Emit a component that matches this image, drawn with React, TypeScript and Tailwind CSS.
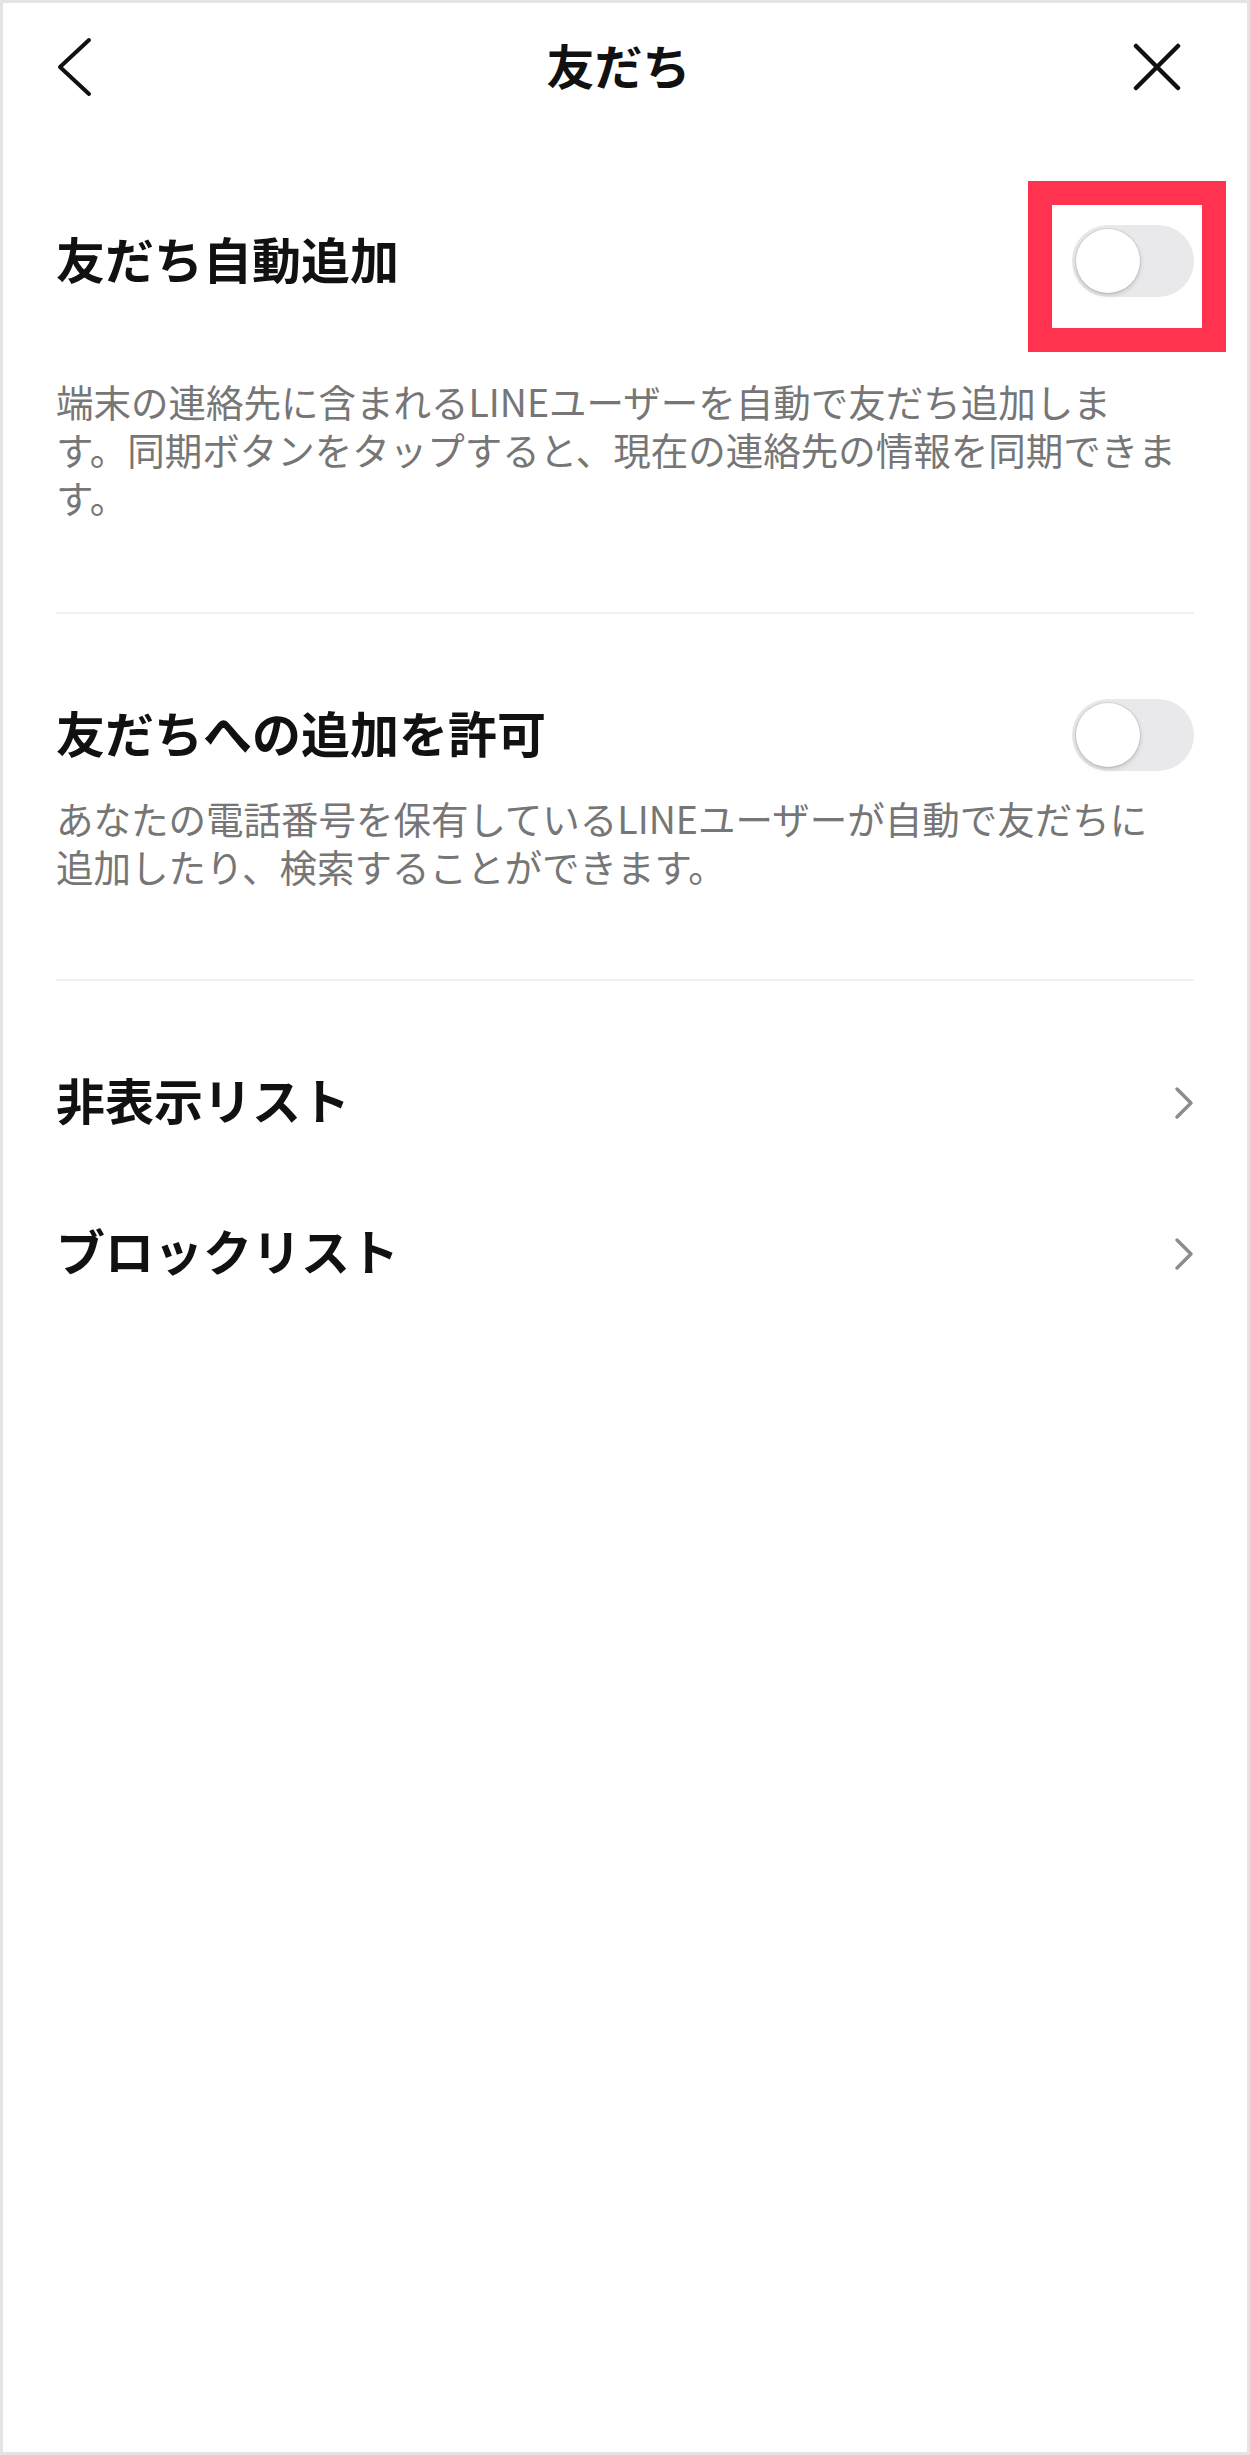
const font = "font-['Noto_Sans_CJK_JP','Noto_Sans',sans-serif]";

type ToggleProps = {
    highlighted?: boolean;
};

const Toggle = ({ highlighted }: ToggleProps) => {
    return (
        <div className="relative w-[122px] h-[72px] shrink-0">
            <div className="w-full h-full rounded-full bg-[#e9e9eb] p-[4px] flex items-center">
                <div className="w-[64px] h-[64px] rounded-full bg-white shadow-[0_0_0_1px_rgba(0,0,0,0.07),0_2px_5px_rgba(0,0,0,0.18)]" />
            </div>
            {highlighted && (
                <div className="absolute left-[-44px] top-[-44px] w-[198px] h-[171px] border-[24px] border-[#ff3350]" />
            )}
        </div>
    );
};

const Chevron = () => (
    <svg width="20" height="34" viewBox="0 0 20 34" fill="none" className="shrink-0">
        <polyline
            points="3,3 17,17 3,31"
            stroke="#8c8c8c"
            strokeWidth="3.5"
            strokeLinecap="round"
            strokeLinejoin="round"
        />
    </svg>
);

const App = () => {
    return (
        <div
            className={`w-[1250px] h-[2455px] bg-white border-[3px] border-[#e4e4e4] text-[#111111] ${font}`}
        >
            {/* header */}
            <div className="h-[127px] grid grid-cols-[1fr_auto_1fr] items-center pl-[53px] pr-[66px]">
                <div className="flex items-center">
                    <svg width="36" height="60" viewBox="0 0 36 60" fill="none">
                        <polyline
                            points="33,3 4,30 33,57"
                            stroke="#111111"
                            strokeWidth="4"
                            strokeLinecap="round"
                            strokeLinejoin="round"
                        />
                    </svg>
                </div>
                <h1 className="text-[48px] font-bold leading-none mb-[5px]">友だち</h1>
                <div className="flex items-center justify-end">
                    <svg width="48" height="48" viewBox="0 0 48 48" fill="none">
                        <path
                            d="M3 3 L45 45 M45 3 L3 45"
                            stroke="#111111"
                            strokeWidth="4.5"
                            strokeLinecap="round"
                        />
                    </svg>
                </div>
            </div>

            <div className="px-[53px]">
                {/* 友だち自動追加 */}
                <div className="pt-[95px] flex items-center justify-between">
                    <span className="text-[49px] font-bold leading-none mb-[8px]">友だち自動追加</span>
                    <Toggle highlighted />
                </div>
                <p className="mt-[80px] text-[37.5px] leading-[48px] text-[#767676]">
                    端末の連絡先に含まれるLINEユーザーを自動で友だち追加しま
                    <br />
                    す。同期ボタンをタップすると、現在の連絡先の情報を同期できま
                    <br />
                    す。
                </p>

                <div className="mt-[91px] h-[2px] bg-[#f0f0f0]" />

                {/* 友だちへの追加を許可 */}
                <div className="mt-[85px] flex items-center justify-between">
                    <span className="text-[49px] font-bold leading-none mb-[8px]">友だちへの追加を許可</span>
                    <Toggle />
                </div>
                <p className="mt-[23px] text-[37.5px] leading-[48px] text-[#767676]">
                    あなたの電話番号を保有しているLINEユーザーが自動で友だちに
                    <br />
                    追加したり、検索することができます。
                </p>

                <div className="mt-[89px] h-[2px] bg-[#f0f0f0]" />

                {/* lists */}
                <div className="pt-[46px]">
                    <div className="h-[151px] flex items-center justify-between">
                        <span className="text-[49px] font-bold leading-none mb-[8px]">非表示リスト</span>
                        <Chevron />
                    </div>
                    <div className="h-[151px] flex items-center justify-between">
                        <span className="text-[49px] font-bold leading-none mb-[8px]">ブロックリスト</span>
                        <Chevron />
                    </div>
                </div>
            </div>
        </div>
    );
};

export default App;
